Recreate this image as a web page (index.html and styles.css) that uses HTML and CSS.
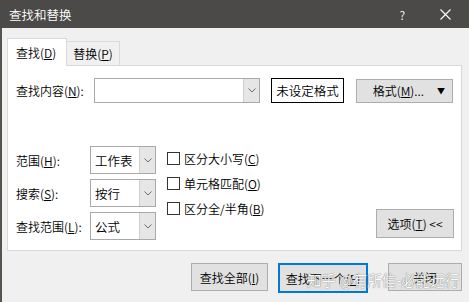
FILE: index.html
```html
<!DOCTYPE html>
<html lang="zh-CN">
<head>
<meta charset="utf-8">
<title>查找和替换</title>
<link rel="stylesheet" href="styles.css">
</head>
<body>
<div class="window">
  <div class="titlebar">
    <span class="title">查找和替换</span>
    <span class="help">?</span>
    <svg class="close" width="11" height="11" viewBox="0 0 11 11"><path d="M0.5 0.5 L10.5 10.5 M10.5 0.5 L0.5 10.5" stroke="#ffffff" stroke-width="1.1" fill="none"/></svg>
  </div>
  <div class="client">
    <div class="tabs">
      <div class="tab active">查找(<u>D</u>)</div>
      <div class="tab">替换(<u>P</u>)</div>
    </div>
    <div class="panel">
      <div class="row-find">
        <span class="find-label">查找内容(<u>N</u>):</span>
        <div class="combo">
          <span class="combo-text"></span>
          <span class="drop"><svg width="8" height="5" viewBox="0 0 8 5"><path d="M0.5 0.5 L4 4 L7.5 0.5" stroke="#6d6d6d" fill="none"/></svg></span>
        </div>
        <div class="fmt-preview">未设定格式</div>
        <div class="btn fmt-btn"><span>格式(<u>M</u>)...</span><span class="tri">▼</span></div>
      </div>
      <div class="row-opts">
        <div class="sel-grid">
          <span class="lbl">范围(<u>H</u>):</span>
          <div class="select"><span class="sel-text">工作表</span><span class="drop"><svg width="8" height="5" viewBox="0 0 8 5"><path d="M0.5 0.5 L4 4 L7.5 0.5" stroke="#6d6d6d" fill="none"/></svg></span></div>
          <span class="lbl">搜索(<u>S</u>):</span>
          <div class="select"><span class="sel-text">按行</span><span class="drop"><svg width="8" height="5" viewBox="0 0 8 5"><path d="M0.5 0.5 L4 4 L7.5 0.5" stroke="#6d6d6d" fill="none"/></svg></span></div>
          <span class="lbl">查找范围(<u>L</u>):</span>
          <div class="select"><span class="sel-text">公式</span><span class="drop"><svg width="8" height="5" viewBox="0 0 8 5"><path d="M0.5 0.5 L4 4 L7.5 0.5" stroke="#6d6d6d" fill="none"/></svg></span></div>
        </div>
        <div class="checks">
          <label class="check"><span class="box"></span>区分大小写(<u>C</u>)</label>
          <label class="check"><span class="box"></span>单元格匹配(<u>O</u>)</label>
          <label class="check"><span class="box"></span>区分全/半角(<u>B</u>)</label>
        </div>
        <div class="btn opt-btn">选项(<u>T</u>) &lt;&lt;</div>
      </div>
    </div>
    <div class="actions">
      <div class="btn act-all">查找全部(<u>I</u>)</div>
      <div class="btn act-next">查找下一个(<u>F</u>)</div>
      <div class="btn act-close">关闭</div>
    </div>
    <div class="watermark">知乎 @有所信-必能远行</div>
  </div>
</div>
</body>
</html>
```
FILE: styles.css
```css
* { box-sizing: border-box; }
html, body { margin: 0; padding: 0; }
body {
  width: 469px;
  height: 302px;
  overflow: hidden;
  background: #f0f0f0;
  font-family: "Noto Sans CJK SC", "Microsoft YaHei", sans-serif;
  font-size: 12px;
  font-weight: 350;
  color: #000;
}
u { text-decoration: underline; text-underline-offset: 1px; }
.window { display: flex; flex-direction: column; height: 302px; }
.titlebar {
  height: 28px;
  background: #4b4a48;
  color: #fff;
  display: flex;
  align-items: center;
  padding-left: 9px;
}
.title { font-size: 12.5px; flex: 1; }
.help { font-size: 12px; margin-right: 35px; }
.close { margin-right: 18px; }
.client {
  flex: 1;
  border-left: 2px solid #55544f;
  padding: 10px 0 0 5px;
  position: relative;
}
.tabs { display: flex; align-items: flex-end; height: 27px; }
.tab {
  height: 24px;
  width: 53px;
  border: 1px solid #d9d9d9;
  border-left: none;
  border-bottom: none;
  display: flex;
  align-items: center;
  justify-content: center;
  background: #f0f0f0;
}
.tab.active {
  height: 28px;
  width: 60px;
  border-left: 1px solid #d9d9d9;
  background: #fff;
  margin-bottom: -1px;
  position: relative;
  z-index: 1;
  justify-content: flex-start;
  padding-left: 8px;
}
.panel {
  width: 455px;
  height: 186px;
  background: #fff;
  border: 1px solid #d9d9d9;
  padding: 12px 0 0 8px;
}
.row-find { display: flex; align-items: center; height: 25px; }
.find-label { width: 78px; }
.combo, .select {
  display: flex;
  border: 1px solid #a9a9a9;
  background: #fff;
}
.combo { width: 166px; height: 25px; }
.combo-text, .sel-text { flex: 1; display: flex; align-items: center; padding-left: 4px; }
.drop {
  width: 16px;
  background: #e6e6e6;
  border-left: 1px solid #cfcfcf;
  display: flex;
  align-items: center;
  justify-content: center;
}
.fmt-preview {
  margin-left: 11px;
  width: 73px;
  height: 25px;
  border: 1px solid #000;
  display: flex;
  align-items: center;
  justify-content: center;
  font-size: 12.5px;
}
.btn {
  background: #e1e1e1;
  border: 1px solid #adadad;
  display: flex;
  align-items: center;
  justify-content: center;
}
.fmt-btn {
  margin-left: 12px;
  width: 97px;
  height: 24px;
  justify-content: flex-end;
  padding-right: 7px;
}
.fmt-btn .tri { font-size: 8px; margin-left: 13px; }
.row-opts { display: flex; margin-top: 43px; }
.sel-grid {
  display: grid;
  grid-template-columns: 74px 66px;
  grid-auto-rows: 28px;
  row-gap: 5px;
}
.lbl { display: flex; align-items: center; }
.select { height: 28px; }
.sel-text { font-size: 12.5px; }
.checks { display: flex; flex-direction: column; margin-left: 11px; }
.check { display: flex; align-items: center; height: 25px; }
.box {
  width: 13px;
  height: 13px;
  border: 1px solid #333;
  margin-right: 4px;
  background: #fff;
}
.opt-btn {
  margin-left: auto;
  margin-right: 7px;
  margin-top: 63px;
  width: 78px;
  height: 29px;
}
.actions { display: flex; align-items: flex-start; padding-left: 184px; margin-top: 12px; }
.act-all { width: 77px; height: 28px; }
.act-next {
  margin-left: 10px;
  width: 90px;
  height: 30px;
  border: 2px solid #0078d7;
}
.act-close { margin-left: 20px; width: 74px; height: 28px; }
.watermark {
  position: absolute;
  left: 305px;
  top: 241px;
  font-size: 14.5px;
  color: #ffffff;
  white-space: nowrap;
  text-shadow: 0 0 1px #7a7a7a, 0 0 1px #7a7a7a;
  opacity: 0.9;
}
```
